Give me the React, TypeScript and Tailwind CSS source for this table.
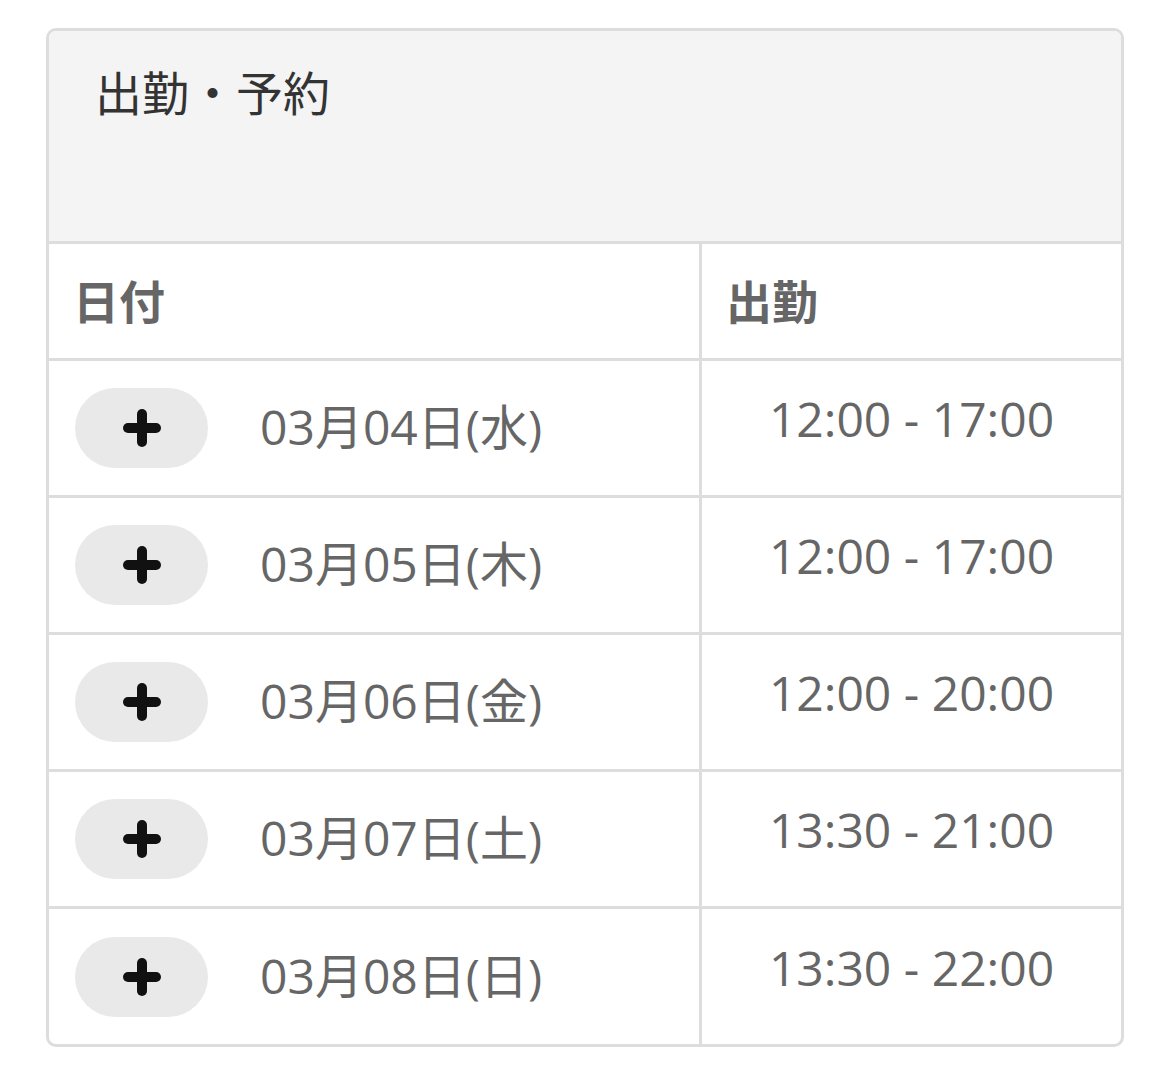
import React from 'react';

const SHIFTS = [
  { date: '03月04日(水)', time: '12:00 - 17:00' },
  { date: '03月05日(木)', time: '12:00 - 17:00' },
  { date: '03月06日(金)', time: '12:00 - 20:00' },
  { date: '03月07日(土)', time: '13:30 - 21:00' },
  { date: '03月08日(日)', time: '13:30 - 22:00' },
];

function PlusIcon() {
  return (
    <svg width="38" height="38" viewBox="0 0 38 38" fill="none" aria-hidden="true">
      <line x1="19" y1="5" x2="19" y2="33" stroke="#111" strokeWidth="10" strokeLinecap="round" />
      <line x1="5" y1="19" x2="33" y2="19" stroke="#111" strokeWidth="10" strokeLinecap="round" />
    </svg>
  );
}

export default function App() {
  return (
    <div
      className="min-h-screen bg-white pl-[46px] pt-[28px]"
      style={{ fontFamily: '"Open Sans", "Noto Sans CJK JP", sans-serif' }}
    >
      <div className="w-[1078px] overflow-hidden rounded-[10px] border-[3px] border-[#dddddd]">
        {/* Panel heading */}
        <div className="h-[213px] border-b-[3px] border-[#dddddd] bg-[#f4f4f4] pl-[46px] pt-[36px]">
          <h2 className="text-[47px] leading-[52px] text-[#333333]">出勤・予約</h2>
        </div>

        {/* Table */}
        <div className="grid grid-cols-[653px_1fr]">
          <div className="flex h-[117px] items-center border-b-[3px] border-r-[3px] border-[#dddddd] pl-[24px] text-[46px] font-bold text-[#666666]">
            日付
          </div>
          <div className="flex h-[117px] items-center border-b-[3px] border-[#dddddd] pl-[24px] text-[46px] font-bold text-[#666666]">
            出勤
          </div>

          {SHIFTS.map((s, i) => {
            const last = i === SHIFTS.length - 1;
            return (
              <React.Fragment key={s.date}>
                <div
                  className={
                    last
                      ? 'flex h-[135px] items-center border-r-[3px] border-[#dddddd] pl-[26px]'
                      : 'flex h-[137px] items-center border-b-[3px] border-r-[3px] border-[#dddddd] pl-[26px]'
                  }
                >
                  <button className="flex h-[80px] w-[133px] items-center justify-center rounded-full bg-[#e9e9e9]">
                    <PlusIcon />
                  </button>
                  <span className="ml-[52px] pb-[2px] text-[48px] leading-none text-[#666666]">{s.date}</span>
                </div>
                <div
                  className={
                    last
                      ? 'flex h-[135px] items-center justify-center pb-[18px]'
                      : 'flex h-[137px] items-center justify-center border-b-[3px] border-[#dddddd] pb-[18px]'
                  }
                >
                  <span className="text-[48px] leading-none text-[#666666]">{s.time}</span>
                </div>
              </React.Fragment>
            );
          })}
        </div>
      </div>
    </div>
  );
}
